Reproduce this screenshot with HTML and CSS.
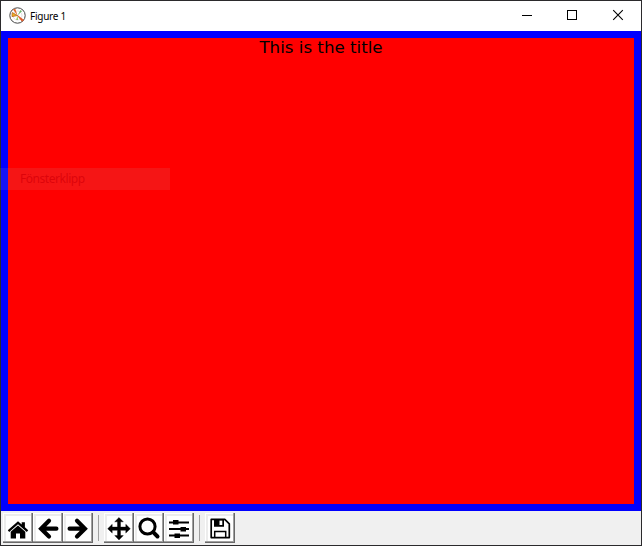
FILE: index.html
```
<!DOCTYPE html>
<html lang="en">
<head>
<meta charset="utf-8">
<title>Figure 1</title>
<link rel="stylesheet" href="styles.css">
</head>
<body>
<div class="window">
  <header class="titlebar">
    <svg class="logo" width="17" height="17" viewBox="0 0 17 17">
      <circle cx="8.5" cy="8.5" r="7.700" fill="#fff" stroke="#444" stroke-width="1"/>
      <circle cx="8.5" cy="8.5" r="4.500" fill="none" stroke="#ccc" stroke-width=".6"/>
      <path d="M8.500 8.500L4 2.500 6.300 1.800Z" fill="#e0682c"/>
      <path d="M8.500 8.500L3.200 5.500 3 9.600Z" fill="#edb51f" stroke="#b8651c" stroke-width=".8"/>
      <path d="M8.500 8.500L13 14.200 14.500 13Z" fill="#e05a28" stroke="#e05a28" stroke-width=".8"/>
      <path d="M8.500 8.500L11.500 3 13 4.200Z" fill="#67b868"/>
      <path d="M8.500 8.500L7.200 13 9 13Z" fill="#8ac34a"/>
    </svg>
    <span class="caption">Figure 1</span>
    <div class="controls">
      <svg width="46" height="30"><path d="M17 14.500h10" stroke="#000"/></svg>
      <svg width="46" height="30"><rect x="16.500" y="9.500" width="9" height="9" fill="none" stroke="#000"/></svg>
      <svg width="46" height="30"><path d="M16.200 9.200l9.600 9.600M25.800 9.200l-9.600 9.600" stroke="#000" stroke-width="1.100"/></svg>
    </div>
  </header>
  <main class="figure">
    <div class="axes"><h1 class="title">This is the title</h1></div>
  </main>
  <footer class="toolbar">
    <div class="tool"><svg viewBox="0 0 30 30"><path d="M4.800 17.300L15 8.200l3.700 3.300V9.200h3.200v5.100l3.300 3-1.400 1.600L15 11.200l-8.800 7.700z"/><path d="M7.700 18.800L15 12.500l7.300 6.300v6.700h-5.300v-5h-4v5H7.700z"/></svg></div>
    <div class="tool"><svg class="arrow" viewBox="0 0 30 30"><path d="M16 7.800L8.100 15.700l7.900 7.900M9 15.700h14.400"/></svg></div>
    <div class="tool"><svg class="arrow" viewBox="0 0 30 30"><path d="M14 7.800l7.900 7.900-7.900 7.900M21 15.700H6.600"/></svg></div>
    <div class="separator"></div>
    <div class="tool"><svg viewBox="0 0 30 30"><path stroke="#000" stroke-width=".4" stroke-linejoin="round" d="M15 4.500l4.300 4.300h-2.800v5.300h5.300v-2.800l4.500 4.400-4.500 4.400v-2.800h-5.300v5.300h2.800L15 26.900l-4.300-4.300h2.800v-5.300H8.200v2.800l-4.500-4.400 4.500-4.400v2.800h5.300V8.800h-2.800z"/></svg></div>
    <div class="tool"><svg viewBox="0 0 30 30"><circle cx="13.500" cy="13.500" r="7.600" fill="none" stroke="#000" stroke-width="3"/><path d="M19.200 19.200l4.300 4.300" stroke="#000" stroke-width="4" stroke-linecap="round"/></svg></div>
    <div class="tool"><svg viewBox="0 0 30 30"><path d="M5 9.500h20M5 16h20M5 22.500h20" stroke="#000" stroke-width="2"/><path d="M9 7h5.500v4.500H9zM16.500 14H22v4.500h-5.500zM10.500 20.500H16V25h-5.500z"/></svg></div>
    <div class="separator"></div>
    <div class="tool"><svg viewBox="0 0 30 30"><path d="M6.200 6.400h13.600l4.500 4.500v13.700H6.200z" fill="none" stroke="#000" stroke-width="1.700" stroke-linejoin="round"/><path d="M9.700 24.500v-6h11v6" fill="none" stroke="#000" stroke-width="1.500"/><path fill-rule="evenodd" d="M9 6h10v7.700H9zM14.500 7.400v4.700h2.800V7.400z"/></svg></div>
  </footer>
  <div class="ghost">Fönsterklipp</div>
</div>
</body>
</html>
```
FILE: styles.css
```
* { box-sizing: border-box; }

body {
  margin: 0;
  background: #2b2a2c;
}

.window {
  position: relative;
  width: 642px;
  height: 546px;
  padding: 1px;
  display: flex;
  flex-direction: column;
}

.titlebar {
  flex: 0 0 30px;
  display: flex;
  align-items: center;
  background: #fff;
  padding-left: 8px;
}

.logo { margin-top: -2px; }

.caption {
  margin-left: 4px;
  margin-top: -1px;
  font: 10px/14px "Noto Sans", sans-serif;
  letter-spacing: -0.25px;
  color: #000;
}

.controls {
  display: flex;
  margin-left: auto;
  margin-right: -2px;
}

.controls svg { display: block; }

.figure {
  flex: 0 0 480px;
  padding: 7px;
  background: #00f;
}

.axes {
  height: 466px;
  background: #f00;
}

.title {
  margin: 0;
  font: 400 16.67px/19px "DejaVu Sans", sans-serif;
  text-align: center;
  color: #000;
}

.toolbar {
  flex: 1;
  display: flex;
  align-items: flex-start;
  padding: 2px;
  background: #f0f0f0;
}

.tool {
  width: 30px;
  height: 30px;
  background: #fff;
  box-shadow: inset -1px -1px #696969, inset -2px -2px #a0a0a0, inset 1px 1px #fff, inset 3px 3px #ececec;
}

.tool svg {
  display: block;
  width: 30px;
  height: 30px;
}

.arrow path {
  fill: none;
  stroke: #000;
  stroke-width: 4.2;
  stroke-linecap: round;
}

.separator {
  width: 1px;
  height: 26px;
  margin: 2px 5px;
  background: #a0a0a0;
}

.ghost {
  position: absolute;
  left: 0;
  top: 168px;
  width: 170px;
  height: 22px;
  padding-left: 20px;
  font: 12px/22px "Noto Sans", sans-serif;
  letter-spacing: -0.45px;
  color: rgba(215, 0, 8, 0.8);
  background: rgba(170, 170, 170, 0.12);
}
```
